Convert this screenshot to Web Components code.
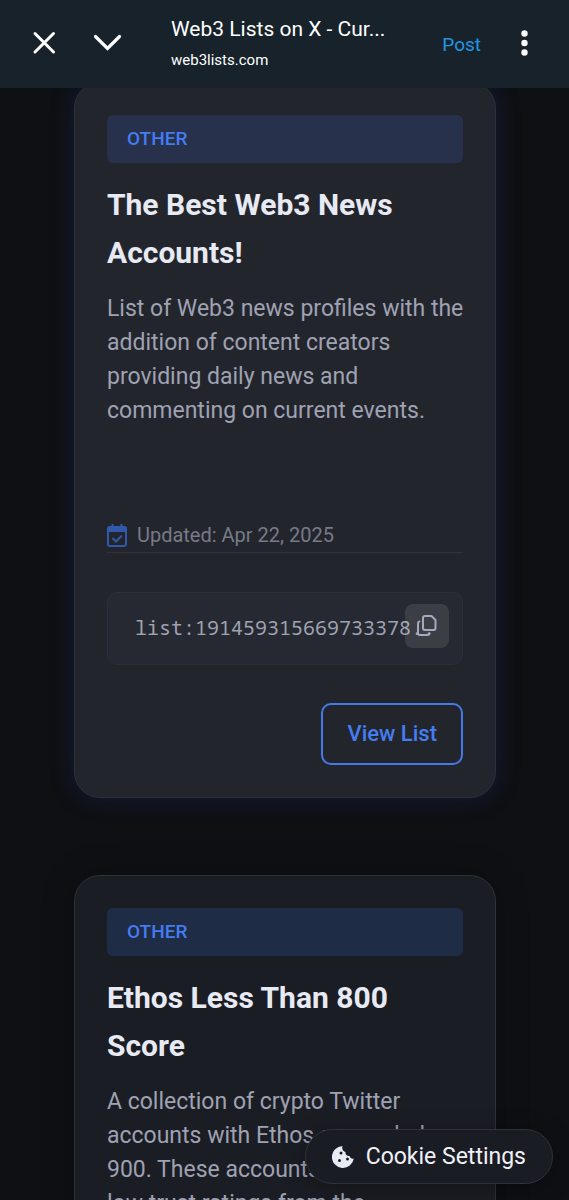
<!DOCTYPE html>
<html lang="en">
<head>
<meta charset="utf-8">
<meta name="viewport" content="width=device-width, initial-scale=1">
<title>Web3 Lists on X</title>
<style>
  html, body { margin: 0; height: 100%; background: #0f1014; }
  body { font-family: Roboto, sans-serif; color: #e8eaf3; overflow: hidden; }
</style>
</head>
<body>
<web-view>
  <browser-bar slot="bar" heading="Web3 Lists on X - Cur..." site="web3lists.com"></browser-bar>
  <list-card active category="Other" heading="The Best Web3 News Accounts!" updated="Apr 22, 2025" code="list:191459315669733378..">
    List of Web3 news profiles with the addition of content creators providing daily news and commenting on current events.
  </list-card>
  <list-card category="Other" heading="Ethos Less Than 800 Score">
    A collection of crypto Twitter accounts with Ethos scores below 900. These accounts usually have low trust ratings from the
  </list-card>
  <cookie-button slot="floating">Cookie Settings</cookie-button>
</web-view>

<script>
class Base extends HTMLElement {
  render(html) {
    const root = this.attachShadow({ mode: 'open' });
    const t = document.createElement('template');
    t.innerHTML = html;
    root.append(t.content.cloneNode(true));
  }
}

customElements.define('web-view', class extends Base {
  connectedCallback() {
    this.render(`
      <style>
        :host { display: flex; flex-direction: column; height: 100vh; position: relative; overflow: hidden; }
        main { flex: 1; min-height: 0; overflow: hidden; padding: 0 13%; }
        .cards { display: grid; gap: 77px; margin-top: -6px; }
        .floating { position: absolute; right: 16px; bottom: 16px; }
      </style>
      <slot name="bar"></slot>
      <main><div class="cards"><slot></slot></div></main>
      <div class="floating"><slot name="floating"></slot></div>`);
  }
});

customElements.define('browser-bar', class extends Base {
  connectedCallback() {
    this.render(`
      <style>
        :host { display: flex; align-items: center; box-sizing: border-box; height: 88px; padding: 0 28px;
          background: #18222b; color: #fff; flex: none; position: relative; z-index: 1; }
        button { border: 0; padding: 0; background: none; color: inherit; font: inherit; display: flex; }
        svg { display: block; }
        .close { margin-right: 32px; }
        .titles { flex: 1; min-width: 0; margin-left: 47px; white-space: nowrap; }
        h1, p { margin: 0; font-weight: 400; }
        h1 { font-size: 21px; line-height: 32px; }
        p { font-size: 15px; line-height: 30px; }
        .post { font-size: 19px; color: #2196e0; margin-right: 28px; }
      </style>
      <button class="close" aria-label="Close"><svg width="32" height="32" viewBox="0 0 32 32" fill="none" stroke="currentColor" stroke-width="3" stroke-linecap="round"><path d="M7 5.500 25.500 24M25.500 5.500 7 24"/></svg></button>
      <button aria-label="Minimize"><svg width="32" height="32" viewBox="0 0 32 32" fill="none" stroke="currentColor" stroke-width="3.200" stroke-linecap="round"><path d="M3.500 8.500 15.500 20.500 27.500 8.500"/></svg></button>
      <div class="titles"><h1></h1><p></p></div>
      <button class="post">Post</button>
      <button aria-label="More"><svg width="32" height="32" viewBox="0 0 32 32" fill="currentColor"><circle cx="15.500" cy="5.500" r="3.200"/><circle cx="15.500" cy="15" r="3.200"/><circle cx="15.500" cy="24.500" r="3.200"/></svg></button>`);
    this.shadowRoot.querySelector('h1').textContent = this.getAttribute('heading');
    this.shadowRoot.querySelector('p').textContent = this.getAttribute('site');
  }
});

customElements.define('copy-field', class extends Base {
  connectedCallback() {
    this.render(`
      <style>
        :host { display: block; position: relative; box-sizing: border-box; padding: 19px 27px 20px;
          background: #262931; border: 1px solid #2c2f38; border-radius: 10px; overflow: hidden; }
        code { display: block; font: 20px/32px "Noto Sans Mono", "DejaVu Sans Mono", monospace; color: #9fa2b2; white-space: nowrap; }
        button { position: absolute; right: 13px; top: 11px; width: 44px; height: 44px; border: 0; padding: 0;
          border-radius: 8px; background: rgba(255,255,255,.1); color: #a6a9bb; display: grid; place-items: center; }
      </style>
      <code><slot></slot></code>
      <button aria-label="Copy"><svg width="24" height="24" viewBox="0 0 24 24" fill="none" stroke="currentColor" stroke-width="2" stroke-linejoin="round" stroke-linecap="round"><path d="M10 2h6.500L20.500 6v8a2 2 0 0 1-2 2H10a2 2 0 0 1-2-2V4a2 2 0 0 1 2-2z"/><path d="M4.500 7.500A2 2 0 0 0 3 9.500V19a2 2 0 0 0 2 2h7.500a2 2 0 0 0 2-1.500"/></svg></button>`);
  }
});

customElements.define('list-card', class extends Base {
  connectedCallback() {
    const updated = this.getAttribute('updated');
    this.render(`
      <style>
        :host { display: block; box-sizing: border-box; padding: 32px; border: 1px solid #2f3138;
          border-radius: 26px; background: #1b1d24; box-shadow: 0 0 32px rgba(0,0,0,.25); }
        :host([active]) { background: #23252d; border-color: #2c303d; box-shadow: 0 0 24px rgba(28,60,140,.28); }
        .tag { box-sizing: border-box; padding: 0 20px; border-radius: 6px; background: #1f2c46;
          font-size: 19px; line-height: 48px; font-weight: 500; color: #437df0; text-transform: uppercase; }
        :host([active]) .tag { background: #27314c; }
        h2 { margin: 18px 0 15px; font-size: 30px; line-height: 48px; font-weight: 700; color: #e8eaf3; }
        .text { margin: 0 -8px 0 0; font-size: 23px; line-height: 34px; color: #9fa2b2; }
        :host([active]) .text { min-height: 226px; }
        .updated { display: flex; align-items: center; gap: 10px; border-bottom: 1px solid #30333d;
          font-size: 20px; line-height: 34px; color: #777a88; }
        .updated svg { color: #3158ab; }
        copy-field { margin-top: 39px; }
        .actions { display: flex; justify-content: flex-end; margin-top: 38px; }
        a { box-sizing: border-box; padding: 0 24px; border: 2px solid #4579e8; border-radius: 10px;
          font-size: 22px; line-height: 58px; font-weight: 500; color: #437df0; text-decoration: none; }
      </style>
      <div class="tag"></div>
      <h2></h2>
      <p class="text"><slot></slot></p>
      ${updated ? `
      <div class="updated">
        <svg width="20" height="23" viewBox="0 0 20 23" fill="none"><path d="M5.500 0v4M14.500 0v4" stroke="currentColor" stroke-width="2"/><path d="M1 7.500V20q0 2 2 2h14q2 0 2-2V7.500" stroke="currentColor" stroke-width="2"/><path d="M2.500 2h15Q20 2 20 4.500V8H0V4.500Q0 2 2.500 2z" fill="currentColor"/><path d="m5.500 14 3.500 3.500 6-6" stroke="currentColor" stroke-width="2"/></svg>
        <span>Updated: ${updated}</span>
      </div>
      <copy-field>${this.getAttribute('code')}</copy-field>
      <div class="actions"><a href="#list">View List</a></div>` : ''}`);
    this.shadowRoot.querySelector('.tag').textContent = this.getAttribute('category').toUpperCase();
    this.shadowRoot.querySelector('h2').textContent = this.getAttribute('heading');
  }
});

customElements.define('cookie-button', class extends Base {
  connectedCallback() {
    this.render(`
      <style>
        :host { display: block; }
        button { display: flex; align-items: center; gap: 12px; padding: 0 26px; border: 1px solid #2f323b;
          border-radius: 28px; background: #1a1c24; color: #f0f1f7; font: 23px/53px Roboto, sans-serif;
          box-shadow: 0 4px 24px rgba(0,0,0,.3); }
      </style>
      <button><svg width="22" height="22" viewBox="0 0 22 22"><path fill="#e8eaf6" d="M10.500 0a11 11 0 1 0 11.300 12.500 3.500 3.500 0 0 1-4.300-2.500c-2.500.5-4.500-1.500-4-4C11 5.500 9.500 3 10.500 0z"/><g fill="#1a1c24"><circle cx="9" cy="7" r="1.500"/><circle cx="7.500" cy="14.500" r="1.500"/><circle cx="15.500" cy="13" r="1.500"/></g></svg><slot></slot></button>`);
  }
});
</script>
</body>
</html>
